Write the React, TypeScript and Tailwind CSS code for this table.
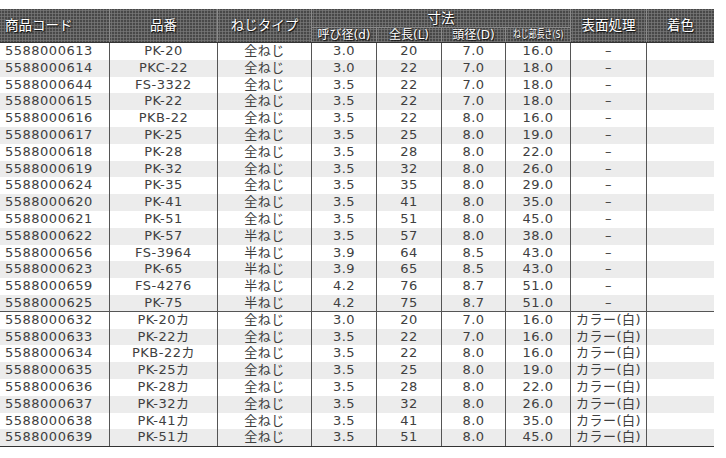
import React from "react";

type Row = [string, string, string, string, string, string, string, string];

const DASH = "–";

const rows: Row[] = [
  ["5588000613", "PK-20", "全ねじ", "3.0", "20", "7.0", "16.0", DASH],
  ["5588000614", "PKC-22", "全ねじ", "3.0", "22", "7.0", "18.0", DASH],
  ["5588000644", "FS-3322", "全ねじ", "3.5", "22", "7.0", "18.0", DASH],
  ["5588000615", "PK-22", "全ねじ", "3.5", "22", "7.0", "18.0", DASH],
  ["5588000616", "PKB-22", "全ねじ", "3.5", "22", "8.0", "16.0", DASH],
  ["5588000617", "PK-25", "全ねじ", "3.5", "25", "8.0", "19.0", DASH],
  ["5588000618", "PK-28", "全ねじ", "3.5", "28", "8.0", "22.0", DASH],
  ["5588000619", "PK-32", "全ねじ", "3.5", "32", "8.0", "26.0", DASH],
  ["5588000624", "PK-35", "全ねじ", "3.5", "35", "8.0", "29.0", DASH],
  ["5588000620", "PK-41", "全ねじ", "3.5", "41", "8.0", "35.0", DASH],
  ["5588000621", "PK-51", "全ねじ", "3.5", "51", "8.0", "45.0", DASH],
  ["5588000622", "PK-57", "半ねじ", "3.5", "57", "8.0", "38.0", DASH],
  ["5588000656", "FS-3964", "半ねじ", "3.9", "64", "8.5", "43.0", DASH],
  ["5588000623", "PK-65", "半ねじ", "3.9", "65", "8.5", "43.0", DASH],
  ["5588000659", "FS-4276", "半ねじ", "4.2", "76", "8.7", "51.0", DASH],
  ["5588000625", "PK-75", "半ねじ", "4.2", "75", "8.7", "51.0", DASH],
  ["5588000632", "PK-20カ", "全ねじ", "3.0", "20", "7.0", "16.0", "カラー(白)"],
  ["5588000633", "PK-22カ", "全ねじ", "3.5", "22", "7.0", "16.0", "カラー(白)"],
  ["5588000634", "PKB-22カ", "全ねじ", "3.5", "22", "8.0", "16.0", "カラー(白)"],
  ["5588000635", "PK-25カ", "全ねじ", "3.5", "25", "8.0", "19.0", "カラー(白)"],
  ["5588000636", "PK-28カ", "全ねじ", "3.5", "28", "8.0", "22.0", "カラー(白)"],
  ["5588000637", "PK-32カ", "全ねじ", "3.5", "32", "8.0", "26.0", "カラー(白)"],
  ["5588000638", "PK-41カ", "全ねじ", "3.5", "41", "8.0", "35.0", "カラー(白)"],
  ["5588000639", "PK-51カ", "全ねじ", "3.5", "51", "8.0", "45.0", "カラー(白)"],
];

const cols =
  "grid grid-cols-[110px_108px_94px_65px_65px_64px_65px_76px_67px]";

// dark halftone header cell
const head =
  "flex items-center justify-center text-white bg-[#484848] bg-[radial-gradient(#767676_0.9px,transparent_1.3px)] bg-[length:3px_3px] [text-shadow:0_0_2px_#111,1px_1px_1px_#111]";

export default function App() {
  return (
    <div
      className="w-[726px] h-[458px] bg-white pt-[9px]"
      style={{ fontFamily: '"DejaVu Sans", "Noto Sans CJK JP", sans-serif' }}
    >
      <div className="w-[714px]">
        {/* header */}
        <div className={`${cols} grid-rows-[19px_14px] text-[13.5px] border-b border-[#333]`}>
          <div className={`${head} row-span-2 justify-start pl-[5px] border-r border-[#8a8a8a]`}>商品コード</div>
          <div className={`${head} row-span-2 border-r border-[#8a8a8a]`}>品番</div>
          <div className={`${head} row-span-2 border-r border-[#8a8a8a]`}>ねじタイプ</div>
          <div className={`${head} col-span-4 border-r border-b border-[#8a8a8a]`}>寸法</div>
          <div className={`${head} row-span-2 border-r border-[#8a8a8a]`}>表面処理</div>
          <div className={`${head} row-span-2`}>着色</div>
          <div className={`${head} text-[12px] border-r border-[#8a8a8a]`}>呼び径(d)</div>
          <div className={`${head} text-[12px] border-r border-[#8a8a8a]`}>全長(L)</div>
          <div className={`${head} text-[12px] border-r border-[#8a8a8a]`}>頭径(D)</div>
          <div className={`${head} text-[11px] border-r border-[#8a8a8a]`}>
            <span className="inline-block scale-x-[0.72] whitespace-nowrap">ねじ部長さ(S)</span>
          </div>
        </div>

        {/* body */}
        <div className="text-[13px] text-[#404040] tracking-[0.5px] border-b border-[#333]">
          {rows.map((r, i) => (
            <div
              key={r[0]}
              className={`${cols} h-[16.8px] leading-[16.8px] ${i % 2 ? "bg-[#ececec]" : "bg-white"} ${i === 15 ? "border-b border-[#555]" : ""}`}
            >
              <div className="pl-[5px] border-r border-[#555] whitespace-nowrap">{r[0]}</div>
              {r.slice(1).map((c, j) => (
                <div
                  key={j}
                  className={`text-center whitespace-nowrap ${j < 7 ? "border-r border-[#555]" : ""}`}
                >
                  {c}
                </div>
              ))}
            </div>
          ))}
        </div>
      </div>
    </div>
  );
}
